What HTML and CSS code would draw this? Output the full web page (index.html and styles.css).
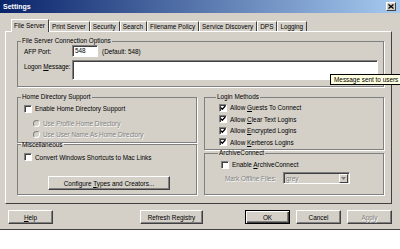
FILE: index.html
```html
<!DOCTYPE html>
<html lang="en">

<head>
  <meta charset="UTF-8">
  <title>Settings</title>
  <link rel="stylesheet" href="styles.css">
</head>

<body>
  <div class="window">
    <div class="titlebar">
      <span class="title">Settings</span>
      <span class="close">
        <svg width="6" height="5" viewBox="0 0 6 5"><path d="M0.5 0.5 L5.5 4.5 M5.5 0.5 L0.5 4.5" stroke="#000" stroke-width="1.3"/></svg>
      </span>
    </div>

    <div class="tabs">
      <div class="tab active">File Server</div>
      <div class="tab">Print Server</div>
      <div class="tab">Security</div>
      <div class="tab">Search</div>
      <div class="tab">Filename Policy</div>
      <div class="tab">Service Discovery</div>
      <div class="tab">DPS</div>
      <div class="tab">Logging</div>
    </div>

    <div class="panel">
      <fieldset class="group conn">
        <legend>File Server Connection Options</legend>
        <div class="field">
          <label>AFP Port:</label>
          <span class="text-input port">548</span>
          <span class="hint">(Default: 548)</span>
        </div>
        <div class="field top">
          <label>Logon <u>M</u>essage:</label>
          <span class="text-input message"></span>
        </div>
      </fieldset>

      <div class="columns">
        <div class="col">
          <fieldset class="group home">
            <legend>Home Directory Support</legend>
            <div class="opt first"><span class="check"></span><span>Enable Home Directory Support</span></div>
            <div class="opt sub disabled"><span class="radio"></span><span>Use Profile Home Directory</span></div>
            <div class="opt sub disabled"><span class="radio"></span><span>Use User Name As Home Directory</span></div>
          </fieldset>
          <fieldset class="group misc">
            <legend>Miscellaneous</legend>
            <div class="opt"><span class="check"></span><span>Convert Windows Shortcuts to Mac Links</span></div>
            <button class="btn configure">Configure <u>T</u>ypes and Creators...</button>
          </fieldset>
        </div>

        <div class="col">
          <fieldset class="group login">
            <legend>Login Methods</legend>
            <div class="opt"><span class="check on"><svg width="6" height="6" viewBox="0 0 6 6"><path d="M0.8 2.6 L2.3 4.2 L5.3 1" fill="none" stroke="#000" stroke-width="1.3"/></svg></span><span>Allow <u>G</u>uests To Connect</span></div>
            <div class="opt"><span class="check on"><svg width="6" height="6" viewBox="0 0 6 6"><path d="M0.8 2.6 L2.3 4.2 L5.3 1" fill="none" stroke="#000" stroke-width="1.3"/></svg></span><span>Allow <u>C</u>lear Text Logins</span></div>
            <div class="opt"><span class="check on"><svg width="6" height="6" viewBox="0 0 6 6"><path d="M0.8 2.6 L2.3 4.2 L5.3 1" fill="none" stroke="#000" stroke-width="1.3"/></svg></span><span>Allow <u>E</u>ncrypted Logins</span></div>
            <div class="opt"><span class="check on"><svg width="6" height="6" viewBox="0 0 6 6"><path d="M0.8 2.6 L2.3 4.2 L5.3 1" fill="none" stroke="#000" stroke-width="1.3"/></svg></span><span>Allow <u>K</u>erberos Logins</span></div>
          </fieldset>
          <fieldset class="group archive">
            <legend>ArchiveConnect</legend>
            <div class="opt"><span class="check"></span><span>Enable <u>A</u>rchiveConnect</span></div>
            <div class="select-row">
              <span class="select-label disabled">Mark Offline Files:</span>
              <span class="select">
                <span class="select-value disabled">grey</span>
                <span class="select-arrow">
                  <svg width="5" height="3" viewBox="0 0 5 3"><path d="M0 0 H5 L2.5 3 Z" fill="#808080"/></svg>
                </span>
              </span>
            </div>
          </fieldset>
        </div>
      </div>
    </div>

    <div class="buttons">
      <button class="btn"><u>H</u>elp</button>
      <button class="btn wide refresh">Refresh Registry</button>
      <button class="btn default">OK</button>
      <button class="btn">Cancel</button>
      <button class="btn disabled">Apply</button>
    </div>

    <div class="tooltip">Message sent to users</div>
  </div>
</body>

</html>
```

FILE: styles.css
```css
* {
  box-sizing: border-box;
}

body {
  margin: 0;
  background: #fff;
  font-family: "Liberation Sans", Arial, sans-serif;
  font-size: 6.4px;
  color: #000;
  overflow: hidden;
}

.window {
  position: relative;
  width: 400px;
  height: 230px;
  background: #d4d0c8;
  border-bottom: 1px solid #404040;
}

.titlebar {
  height: 13px;
  background: linear-gradient(to right, #0a246a, #a6caf0);
  display: flex;
  align-items: center;
  justify-content: space-between;
  padding: 0 4px 0 3px;
}

.title {
  color: #fff;
  font-weight: bold;
  font-size: 7px;
}

.close {
  width: 10px;
  height: 9px;
  background: #d4d0c8;
  border: 1px solid;
  border-color: #fff #404040 #404040 #fff;
  display: flex;
  align-items: center;
  justify-content: center;
}

/* tab strip */
.tabs {
  position: relative;
  z-index: 1;
  display: flex;
  align-items: flex-end;
  height: 12px;
  margin: 6px 0 0 11px;
}

.tab {
  height: 10px;
  padding: 0 3px 0 2px;
  line-height: 9px;
  border: 1px solid;
  border-color: #fff #404040 transparent #fff;
  border-bottom: none;
  white-space: nowrap;
}

.tab.active {
  height: 13px;
  margin-bottom: -1px;
  background: #d4d0c8;
  line-height: 11px;
}

.panel {
  height: 173px;
  margin: 0 8px 0 5px;
  padding: 5px 7px 0 11px;
  border: 1px solid;
  border-color: #fff #404040 #404040 #fff;
}

/* group boxes */
.group {
  margin: 0;
  padding: 0 4px 5px 6px;
  border: 1px solid #808080;
  box-shadow: 1px 1px 0 #fff;
  min-width: 0;
}

.group legend {
  margin-left: -3px;
  padding: 0 1px;
  line-height: 8px;
}

.field {
  display: flex;
  align-items: center;
}

.field.top {
  align-items: flex-start;
  margin-top: 3px;
}

.field.top label {
  margin-top: 3px;
}

.field label {
  flex-shrink: 0;
  width: 48px;
  letter-spacing: -0.05px;
  white-space: nowrap;
}

.text-input {
  display: block;
  height: 12px;
  background: #fff;
  border: 1px solid;
  border-color: #808080 #fff #fff #808080;
  box-shadow: inset 1px 1px 0 #404040;
  padding: 0 2px;
  line-height: 10px;
}

.port {
  width: 26px;
}

.message {
  width: 306px;
  height: 20px;
}

.hint {
  margin-left: 4px;
}

.conn {
  padding-bottom: 6px;
}

.columns {
  display: grid;
  grid-template-columns: 1fr 1fr;
  gap: 7px;
  margin-top: 6px;
}

.opt {
  display: flex;
  align-items: center;
  height: 11.5px;
  white-space: nowrap;
}

.check {
  width: 8px;
  height: 8px;
  margin-right: 3px;
  background: #fff;
  border: 1px solid;
  border-color: #808080 #fff #fff #808080;
  box-shadow: inset 1px 1px 0 #404040;
  display: flex;
}

.radio {
  width: 7px;
  height: 7px;
  margin-right: 3px;
  border-radius: 50%;
  background: #d4d0c8;
  border: 1px solid;
  border-color: #808080 #fff #fff #808080;
}

.sub {
  padding-left: 9px;
}

.disabled {
  color: #808080;
  text-shadow: 0.6px 0.6px 0 #fff;
}

.home {
  padding-top: 2px;
  padding-bottom: 1px;
}

.home .first {
  margin-bottom: 3px;
}

.misc {
  margin-top: -2px;
  padding-top: 3px;
  padding-bottom: 4px;
}

.login {
  padding-left: 14px;
  padding-top: 1px;
  padding-bottom: 1px;
}

.archive {
  margin-top: -1px;
  padding-left: 16px;
  padding-top: 2px;
  padding-bottom: 10px;
}

.select-row {
  display: flex;
  align-items: center;
  height: 12px;
  margin-top: 1.5px;
  padding-left: 4px;
}

.select-label {
  width: 58px;
}

.select {
  display: flex;
  width: 67px;
  height: 12px;
  background: #d4d0c8;
  border: 1px solid;
  border-color: #808080 #fff #fff #808080;
  box-shadow: inset 1px 1px 0 #404040;
  padding: 1px 1px 0 2px;
}

.select-value {
  flex: 1;
  line-height: 9px;
}

.select-arrow {
  width: 9px;
  height: 9px;
  border: 1px solid;
  border-color: #fff #404040 #404040 #fff;
  display: flex;
  align-items: center;
  justify-content: center;
}

/* buttons */
.btn {
  font: inherit;
  color: #000;
  width: 45px;
  height: 14px;
  padding: 0;
  background: #d4d0c8;
  border: 1px solid;
  border-color: #fff #404040 #404040 #fff;
  box-shadow: inset -1px -1px 0 #808080;
  white-space: nowrap;
}

.btn.wide {
  width: 63px;
}

.btn.disabled {
  color: #808080;
  text-shadow: 0.6px 0.6px 0 #fff;
}

.btn.default {
  border-color: #000;
  box-shadow: inset 1px 1px 0 #fff, inset -1px -1px 0 #404040, inset -2px -2px 0 #808080;
}

.configure {
  display: block;
  width: 122px;
  margin: 13px 0 0 24px;
}

.buttons {
  display: flex;
  gap: 6px;
  padding: 6px 8px 0 8px;
}

.refresh {
  margin-left: 81px;
}

.buttons .default {
  margin-left: auto;
}

.tooltip {
  position: absolute;
  left: 330px;
  top: 74px;
  height: 11px;
  padding: 0 3px;
  line-height: 9px;
  background: #ffffe1;
  border: 1px solid #000;
  white-space: nowrap;
}
```
